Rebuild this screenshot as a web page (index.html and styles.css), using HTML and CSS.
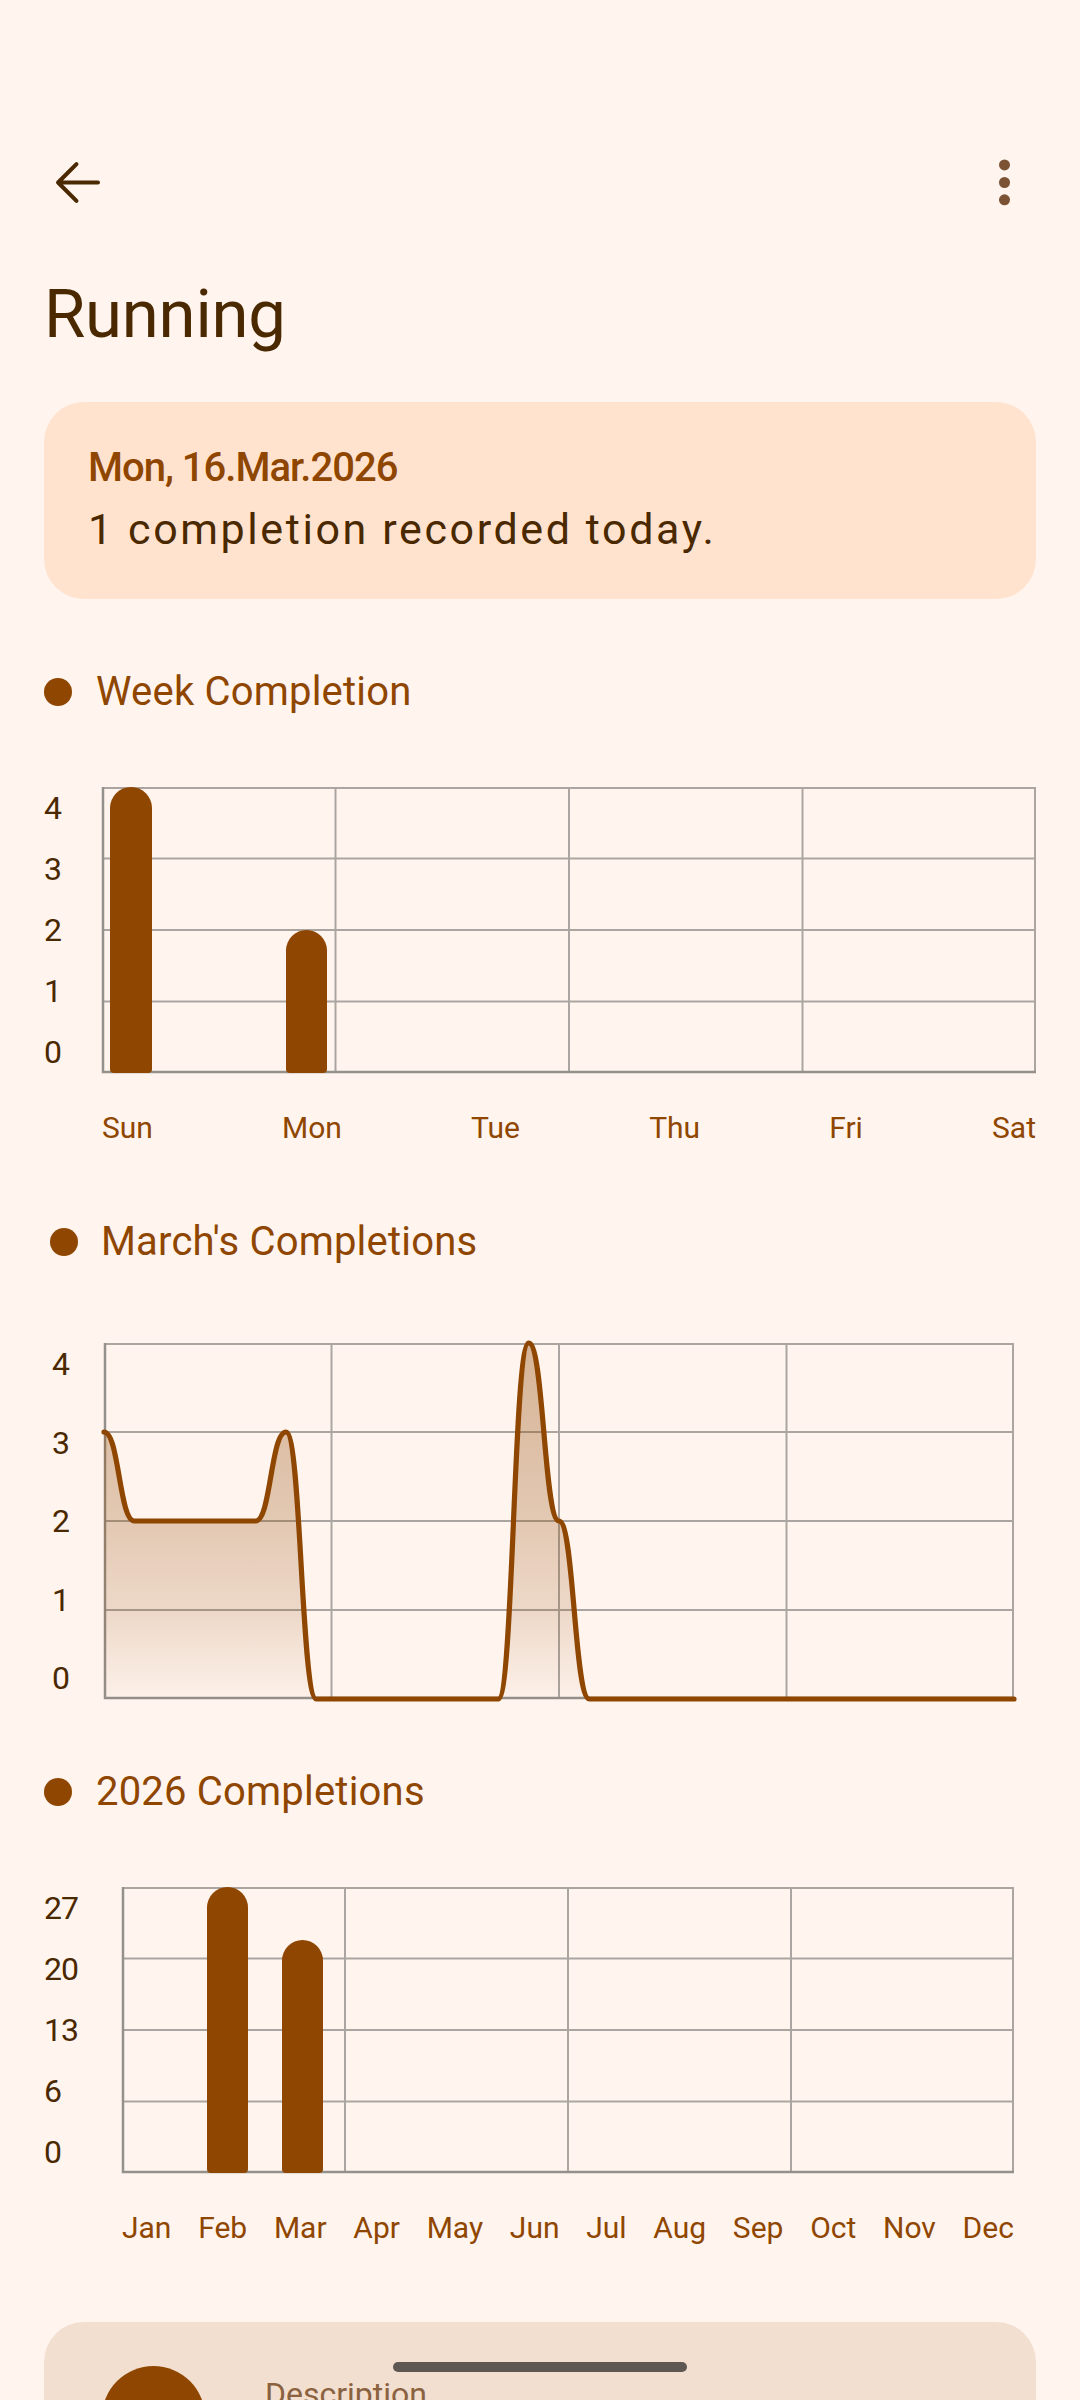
FILE: index.html
```html
<!DOCTYPE html>
<html lang="en">
<head>
  <meta charset="UTF-8" />
  <meta name="viewport" content="width=device-width, initial-scale=1.0"/>
  <title>Running</title>
  <link rel="stylesheet" href="styles.css">
</head>
<body>

  <div class="screen">
    <div class="topbar">
      <button class="icon-btn back" aria-label="Back">
        <svg viewBox="0 0 24 24" width="63" height="63">
          <path d="M11.6 5 4.6 12l7 7M4.6 12h15.2" fill="none" stroke="#4a2800" stroke-width="1.55" stroke-linecap="round" stroke-linejoin="round"/>
        </svg>
      </button>
      <button class="icon-btn" aria-label="More">
        <svg viewBox="0 0 24 24" width="63" height="63" fill="#7b5334">
          <circle cx="12" cy="5.3" r="2.1"/>
          <circle cx="12" cy="12" r="2.1"/>
          <circle cx="12" cy="18.6" r="2.1"/>
        </svg>
      </button>
    </div>

    <h1 class="title">Running</h1>

    <div class="today-card">
      <div class="today-date">Mon, 16.Mar.2026</div>
      <div class="today-text">1 completion recorded today.</div>
    </div>

    <!-- week -->
    <div class="section-head">
      <span class="dot"></span>
      <span>Week Completion</span>
    </div>
    <div class="chart">
      <div class="y-axis">
        <span>4</span><span>3</span><span>2</span><span>1</span><span>0</span>
      </div>
      <svg class="plot" width="934" height="286" viewBox="0 0 934 286">
        <path class="grid" d="M0 1H934M0 71.5H934M0 143H934M0 214.5H934M233.5 0V286M467 0V286M700.5 0V286M933 0V286"/>
        <path class="axis" d="M1 0V285H934"/>
        <path class="bar" d="M8 21A21 21 0 0 1 50 21V282Q50 286 46 286H12Q8 286 8 282Z"/>
        <path class="bar" d="M184 163.5A20.5 20.5 0 0 1 225 163.5V282Q225 286 221 286H188Q184 286 184 282Z"/>
      </svg>
    </div>
    <div class="x-axis">
      <span>Sun</span><span>Mon</span><span>Tue</span><span>Thu</span><span>Fri</span><span>Sat</span>
    </div>

    <!-- month -->
    <div class="section-head month-head">
      <span class="dot"></span>
      <span>March's Completions</span>
    </div>
    <div class="chart month-chart">
      <div class="y-axis">
        <span>4</span><span>3</span><span>2</span><span>1</span><span>0</span>
      </div>
      <svg class="plot" width="910" height="356" viewBox="0 0 910 356">
        <defs>
          <linearGradient id="fade" x1="0" y1="0" x2="0" y2="356" gradientUnits="userSpaceOnUse">
            <stop offset="0" stop-color="#8f4600" stop-opacity="0.37"/>
            <stop offset="0.25" stop-color="#8f4600" stop-opacity="0.31"/>
            <stop offset="0.5" stop-color="#8f4600" stop-opacity="0.25"/>
            <stop offset="0.75" stop-color="#8f4600" stop-opacity="0.16"/>
            <stop offset="1" stop-color="#8f4600" stop-opacity="0.02"/>
          </linearGradient>
        </defs>
        <path class="grid" d="M0 1H910M0 89H910M0 178H910M0 267H910M227.5 0V356M455 0V356M682.5 0V356M909 0V356"/>
        <path class="axis" d="M1 0V355H910"/>
        <path fill="url(#fade)" d="M0 89C15.17 89 15.17 178 30.33 178L151.67 178C166.83 178 166.83 89 182 89C197.17 89 197.17 356 212.33 356L394.33 356C409.5 356 409.5 0 424.67 0C439.83 0 439.83 178 455 178C470.17 178 470.17 356 485.33 356L910 356L0 356Z"/>
        <path class="line" d="M0 89C15.17 89 15.17 178 30.33 178L151.67 178C166.83 178 166.83 89 182 89C197.17 89 197.17 356 212.33 356L394.33 356C409.5 356 409.5 0 424.67 0C439.83 0 439.83 178 455 178C470.17 178 470.17 356 485.33 356L910 356"/>
      </svg>
    </div>

    <!-- year -->
    <div class="section-head year-head">
      <span class="dot"></span>
      <span>2026 Completions</span>
    </div>
    <div class="chart year-chart">
      <div class="y-axis">
        <span>27</span><span>20</span><span>13</span><span>6</span><span>0</span>
      </div>
      <svg class="plot" width="892" height="286" viewBox="0 0 892 286">
        <path class="grid" d="M0 1H892M0 71.5H892M0 143H892M0 214.5H892M223 0V286M446 0V286M669 0V286M891 0V286"/>
        <path class="axis" d="M1 0V285H892"/>
        <path class="bar" d="M85 20.5A20.5 20.5 0 0 1 126 20.5V282Q126 286 122 286H89Q85 286 85 282Z"/>
        <path class="bar" d="M160 73.5A20.5 20.5 0 0 1 201 73.5V282Q201 286 197 286H164Q160 286 160 282Z"/>
      </svg>
    </div>
    <div class="x-axis year-axis">
      <span>Jan</span><span>Feb</span><span>Mar</span><span>Apr</span><span>May</span><span>Jun</span>
      <span>Jul</span><span>Aug</span><span>Sep</span><span>Oct</span><span>Nov</span><span>Dec</span>
    </div>

    <div class="info-card">
      <div class="avatar"></div>
      <div class="info-label">Description</div>
    </div>

    <div class="nav-handle"></div>
  </div>

</body>
</html>
```

FILE: styles.css
```css
html, body {
  margin: 0;
  overflow: hidden;
}

body {
  font-family: Roboto, "Noto Sans", sans-serif;
  background: #fff4ee;
  color: #4a2800;
}

.screen {
  position: relative;
  height: 2400px;
  padding: 0 44px;
  overflow: hidden;
}

.topbar {
  margin-top: 119px;
  height: 126px;
  display: flex;
  align-items: center;
  justify-content: space-between;
}

.icon-btn {
  width: 63px;
  height: 63px;
  padding: 0;
  border: none;
  background: none;
}

.icon-btn svg {
  display: block;
}

.back {
  margin-left: 2px;
}

.title {
  margin: 29px 0 0;
  font-size: 67px;
  font-weight: 400;
  line-height: 80px;
  letter-spacing: -0.2px;
}

.today-card {
  margin-top: 48px;
  padding: 40px 44px 42px;
  background: #ffe3cf;
  border-radius: 40px;
}

.today-date {
  font-size: 40px;
  font-weight: 500;
  line-height: 52px;
  letter-spacing: -1px;
  color: #8f4600;
}

.today-text {
  margin-top: 7px;
  font-size: 43px;
  line-height: 56px;
  letter-spacing: 2.6px;
}

.section-head {
  display: flex;
  align-items: center;
  gap: 24px;
  margin-top: 69px;
  font-size: 40px;
  line-height: 48px;
  letter-spacing: 0.2px;
  color: #8f4600;
}

.dot {
  width: 28px;
  height: 28px;
  border-radius: 50%;
  background: #8f4600;
}

.chart {
  display: flex;
  margin-top: 71px;
}

.y-axis {
  width: 58px;
  display: flex;
  flex-direction: column;
  justify-content: space-between;
  font-size: 32px;
  line-height: 42px;
  letter-spacing: -1px;
}

.plot {
  display: block;
  overflow: visible;
}

.grid {
  fill: none;
  stroke: #aaa5a1;
  stroke-width: 2;
}

.axis {
  fill: none;
  stroke: #94908b;
  stroke-width: 2.5;
}

.bar {
  fill: #8f4600;
}

.line {
  fill: none;
  stroke: #8f4600;
  stroke-width: 5.2;
  stroke-linecap: round;
  stroke-linejoin: round;
}

.x-axis {
  display: flex;
  justify-content: space-between;
  margin: 35px 0 0 58px;
  font-size: 30px;
  line-height: 40px;
  color: #8f4600;
}

.month-head {
  margin-top: 70px;
  padding-left: 6px;
  gap: 23px;
}

.month-chart {
  margin-top: 77px;
}

.month-chart .y-axis {
  width: 52px;
  padding-left: 8px;
}

.year-head {
  margin-top: 69px;
}

.year-chart .y-axis {
  width: 78px;
}

.year-axis {
  margin: 35px 22px 0 78px;
}

.info-card {
  display: flex;
  align-items: flex-start;
  gap: 60px;
  margin-top: 74px;
  min-height: 300px;
  padding: 44px 58px;
  background: #f2dfd0;
  border-radius: 40px;
}

.avatar {
  width: 103px;
  height: 103px;
  border-radius: 50%;
  background: #8f4600;
}

.info-label {
  margin-top: 8px;
  font-size: 32px;
  line-height: 40px;
  color: #8a6240;
}

.nav-handle {
  position: absolute;
  left: 393px;
  top: 2362px;
  width: 294px;
  height: 10px;
  border-radius: 5px;
  background: #5f5852;
}
```
